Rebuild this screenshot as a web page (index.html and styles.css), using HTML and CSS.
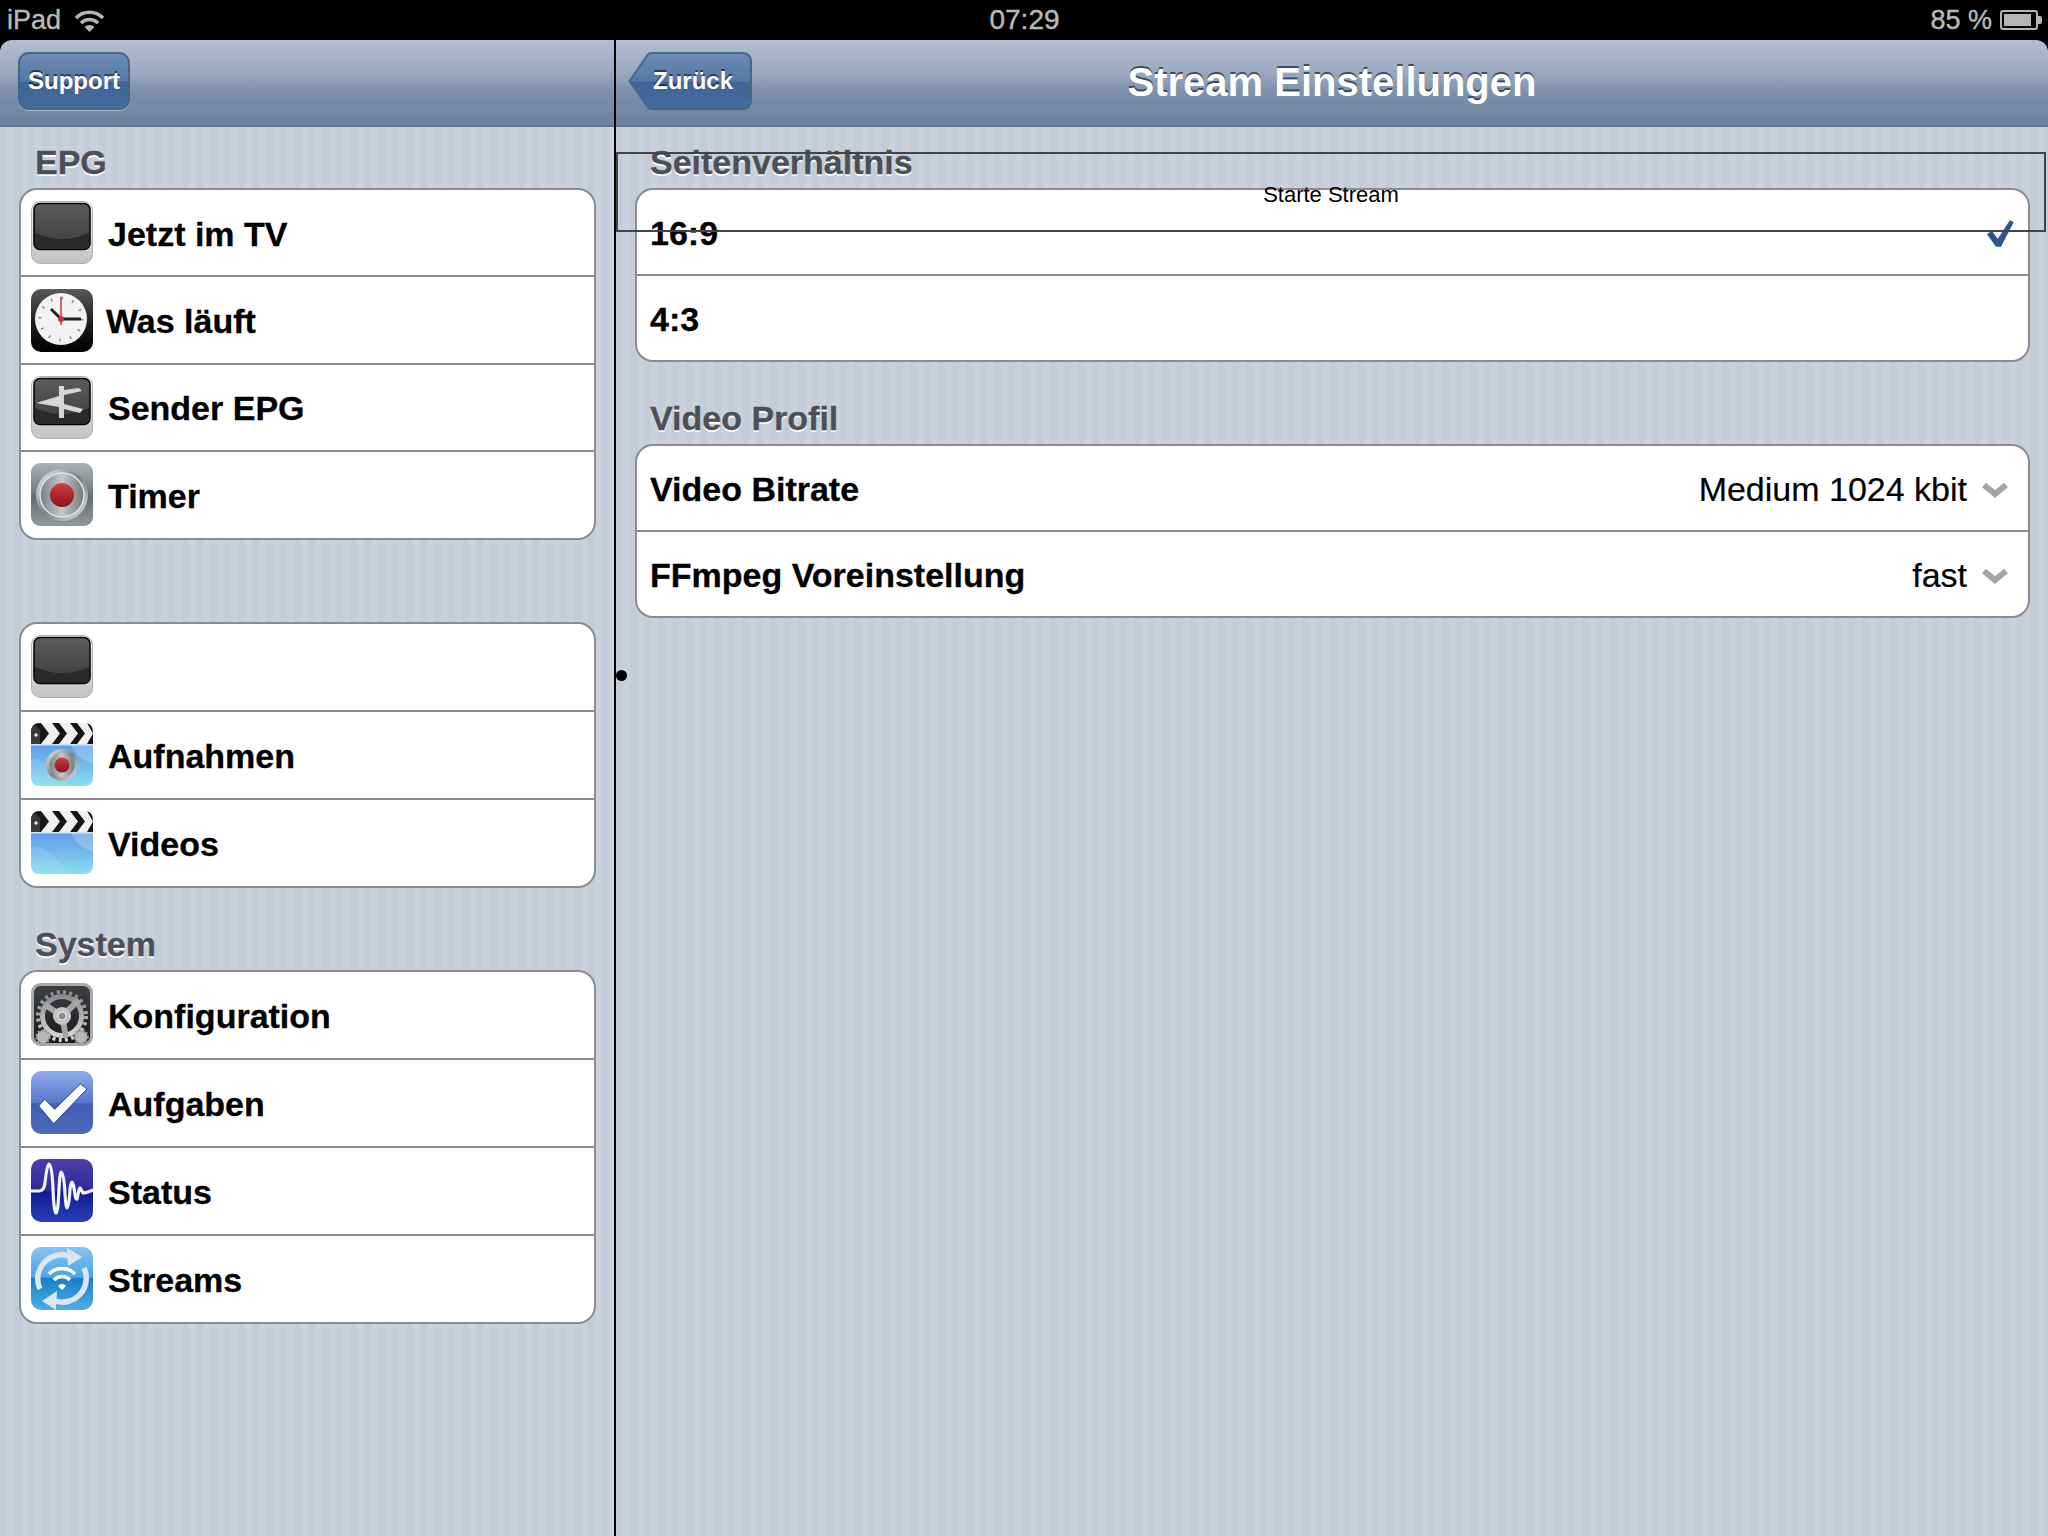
FILE: index.html
```html
<!DOCTYPE html>
<html lang="en">
<head>
  <meta charset="UTF-8">
  <meta name="viewport" content="width=device-width, initial-scale=1.0">
  <title>Stream Einstellungen</title>
  <link rel="stylesheet" href="styles.css">
</head>
<body>

<!-- Shared gradients and the key icon used twice -->
<svg class="svg-defs" aria-hidden="true">
  <defs>
    <linearGradient id="g-key" x1="0" y1="0" x2="0" y2="1"><stop offset="0" stop-color="#f6f6f6"/><stop offset="1" stop-color="#c2c2c2"/></linearGradient>
    <linearGradient id="g-screen" x1="0" y1="0" x2="0" y2="1"><stop offset="0" stop-color="#5c5c5c"/><stop offset="1" stop-color="#3c3c3c"/></linearGradient>
    <linearGradient id="g-clock" x1="0" y1="0" x2="0" y2="1"><stop offset="0" stop-color="#5a5a5a"/><stop offset=".55" stop-color="#1c1c1c"/><stop offset="1" stop-color="#000"/></linearGradient>
    <linearGradient id="g-metal" x1="0" y1="0" x2="0" y2="1"><stop offset="0" stop-color="#aeb2b6"/><stop offset=".48" stop-color="#74797e"/><stop offset=".52" stop-color="#666c71"/><stop offset="1" stop-color="#92979b"/></linearGradient>
    <linearGradient id="g-disc" x1="0" y1="0" x2="1" y2="1"><stop offset="0" stop-color="#f0f0f0"/><stop offset=".5" stop-color="#7c8084"/><stop offset="1" stop-color="#e6e6e6"/></linearGradient>
    <linearGradient id="g-disc-in" x1="0" y1="0" x2="1" y2="0"><stop offset="0" stop-color="#7c8084"/><stop offset=".5" stop-color="#c6c8ca"/><stop offset="1" stop-color="#74787c"/></linearGradient>
    <linearGradient id="g-red" x1="0" y1="0" x2="0" y2="1"><stop offset="0" stop-color="#cc4448"/><stop offset=".5" stop-color="#ae262c"/><stop offset="1" stop-color="#8a181e"/></linearGradient>
    <linearGradient id="g-film" x1="0" y1="0" x2="0" y2="1"><stop offset="0" stop-color="#5f9ce6"/><stop offset=".6" stop-color="#79c0ee"/><stop offset="1" stop-color="#86e0ee"/></linearGradient>
    <linearGradient id="g-gearbg" x1="0" y1="0" x2="0" y2="1"><stop offset="0" stop-color="#3d4145"/><stop offset="1" stop-color="#15181c"/></linearGradient>
    <linearGradient id="g-gear" x1="0" y1="0" x2="0" y2="1"><stop offset="0" stop-color="#8c8c8c"/><stop offset="1" stop-color="#d4d4d4"/></linearGradient>
    <linearGradient id="g-task" x1="0" y1="0" x2="0" y2="1"><stop offset="0" stop-color="#90aced"/><stop offset=".5" stop-color="#5676cc"/><stop offset=".52" stop-color="#3f5fb4"/><stop offset="1" stop-color="#4a68b8"/></linearGradient>
    <linearGradient id="g-wave" x1="0" y1="0" x2="0" y2="1"><stop offset="0" stop-color="#4d3fa8"/><stop offset=".5" stop-color="#2b2a9c"/><stop offset=".52" stop-color="#101c96"/><stop offset="1" stop-color="#2a3cb8"/></linearGradient>
    <linearGradient id="g-sync" x1="0" y1="0" x2="0" y2="1"><stop offset="0" stop-color="#86c4f6"/><stop offset=".48" stop-color="#4ea4e6"/><stop offset=".5" stop-color="#1580c4"/><stop offset="1" stop-color="#4cb0e4"/></linearGradient>
    <linearGradient id="g-nav-btn" x1="0" y1="0" x2="0" y2="1"><stop offset="0" stop-color="#6e8cb4"/><stop offset=".5" stop-color="#5578a6"/><stop offset=".52" stop-color="#3f6599"/><stop offset="1" stop-color="#456a9c"/></linearGradient>
    <symbol id="key-icon" viewBox="0 0 62 63">
      <rect x=".5" y=".5" width="61" height="62" rx="9" fill="url(#g-key)" stroke="#b0b0b0"/>
      <rect x="3" y="2.5" width="56" height="46" rx="6" fill="url(#g-screen)" stroke="#000" stroke-width="1.5"/>
      <path d="M4 32q27 12 54 0v10q0 6-6 6H10q-6 0-6-6z" fill="#2a2a2a"/>
    </symbol>
    <symbol id="clapper" viewBox="0 0 62 63">
      <path d="M0 21V9q0-9 9-9h44q9 0 9 9v12z" fill="#161616"/>
      <path d="M10 0h11l8 10.500-8 10.500H10l8-10.500zM28 0h11l8 10.500-8 10.500H28l8-10.500zM46 0h10l6 10.500-6 10.500H46l8-10.500z" fill="#efefef"/>
      <path d="M0 21V9q0-5 4-7l5 5v14z" fill="#3a3a3a"/>
      <circle cx="5" cy="12" r="1.800" fill="#ddd"/>
      <path d="M0 21h62v33q0 9-9 9H9q-9 0-9-9z" fill="url(#g-film)"/>
      <rect x="0" y="21" width="62" height="1.500" fill="#cfe6f8"/>
      <path d="M40 22h22v18q-15-3-22-18z" fill="#fff" opacity=".22"/>
      <path d="M0 35q24 2 36 28H9q-9 0-9-9z" fill="#fff" opacity=".1"/>
    </symbol>
  </defs>
</svg>

<!-- Status bar -->
<div class="status-bar">
  <div class="status-left">
    <span>iPad</span>
    <svg class="wifi" viewBox="0 0 31 23">
      <path d="M2 9a19 19 0 0 1 27 0M7 14a12 12 0 0 1 17 0" fill="none" stroke="#b4b4b4" stroke-width="3.500"/>
      <path d="M15.500 23l-5-5a7 7 0 0 1 10 0z" fill="#b4b4b4"/>
    </svg>
  </div>
  <div class="status-time">07:29</div>
  <div class="status-right">
    <span>85 %</span>
    <svg class="battery" viewBox="0 0 42 20">
      <rect x="1" y="1" width="36" height="18" rx="2" fill="none" stroke="#b4b4b4" stroke-width="2"/>
      <rect x="4" y="4" width="27" height="12" fill="#b4b4b4"/>
      <path d="M38 6h2q2 0 2 2v4q0 2-2 2h-2z" fill="#b4b4b4"/>
    </svg>
  </div>
</div>

<div class="split">

  <!-- Master -->
  <div class="master">
    <div class="nav-bar nav-bar-left">
      <div class="nav-button">Support</div>
    </div>
    <div class="content content-master">
      <div class="section-title">EPG</div>
      <div class="card card-tight">
        <div class="row">
          <svg class="icon" viewBox="0 0 62 63"><use href="#key-icon"/></svg>
          <span class="row-label">Jetzt im TV</span>
        </div>
        <div class="row">
          <svg class="icon" viewBox="0 0 62 63">
            <rect width="62" height="63" rx="10" fill="url(#g-clock)"/>
            <circle cx="30" cy="30" r="26" fill="#f2f2f2"/>
            <circle cx="30" cy="30" r="21" fill="none" stroke="#8a8a8a" stroke-width="3" stroke-dasharray="1.500 9.500"/>
            <path d="M30 30L20 20" stroke="#222" stroke-width="3"/>
            <path d="M30 30H50" stroke="#222" stroke-width="3"/>
            <path d="M30 36V8" stroke="#c8323c" stroke-width="1.500"/>
            <circle cx="30" cy="30" r="3" fill="#c8323c"/>
          </svg>
          <span class="row-label row-label-clock">Was läuft</span>
        </div>
        <div class="row">
          <svg class="icon" viewBox="0 0 62 63">
            <use href="#key-icon"/>
            <path d="M28 10h5v4l15-2 3 3-18 4v9l19 5-3 4-16-4v9h-5V31L5 27l23-7z" fill="#d6d6d6"/>
          </svg>
          <span class="row-label">Sender EPG</span>
        </div>
        <div class="row">
          <svg class="icon" viewBox="0 0 62 63">
            <rect width="62" height="63" rx="9" fill="url(#g-metal)"/>
            <circle cx="31" cy="32" r="26" fill="url(#g-disc)"/>
            <circle cx="31" cy="32" r="22" fill="url(#g-disc-in)" stroke="#e4e4e4" stroke-width="1.500"/>
            <circle cx="31" cy="32" r="12" fill="url(#g-red)"/>
          </svg>
          <span class="row-label">Timer</span>
        </div>
      </div>

      <div class="section-gap"></div>
      <div class="card">
        <div class="row">
          <svg class="icon" viewBox="0 0 62 63"><use href="#key-icon"/></svg>
        </div>
        <div class="row">
          <svg class="icon" viewBox="0 0 62 63">
            <use href="#clapper"/>
            <circle cx="31" cy="42" r="16" fill="url(#g-disc)"/>
            <circle cx="31" cy="42" r="12.500" fill="url(#g-disc-in)"/>
            <circle cx="31" cy="42" r="7.500" fill="url(#g-red)"/>
          </svg>
          <span class="row-label">Aufnahmen</span>
        </div>
        <div class="row">
          <svg class="icon" viewBox="0 0 62 63"><use href="#clapper"/></svg>
          <span class="row-label">Videos</span>
        </div>
      </div>

      <div class="section-title">System</div>
      <div class="card">
        <div class="row">
          <svg class="icon" viewBox="0 0 62 63">
            <rect x="1.500" y="1.500" width="59" height="60" rx="8" fill="url(#g-gearbg)" stroke="#a8a8a8" stroke-width="3"/>
            <circle cx="31" cy="33" r="24" fill="none" stroke="url(#g-gear)" stroke-width="4" stroke-dasharray="3 3.300"/>
            <circle cx="31" cy="33" r="19.500" fill="none" stroke="url(#g-gear)" stroke-width="5"/>
            <path d="M31 33L13 21M31 33L48 17M31 33L35 54" stroke="#a4a4a4" stroke-width="6"/>
            <circle cx="31" cy="33" r="9" fill="#c4c4c4"/>
            <circle cx="31" cy="33" r="4" fill="#8a8a8a" stroke="#eee"/>
            <circle cx="12" cy="54" r="6.500" fill="#b8b8b8" stroke="#999" stroke-width="2.500" stroke-dasharray="2 1.500"/>
            <circle cx="50" cy="54" r="6.500" fill="#b8b8b8" stroke="#999" stroke-width="2.500" stroke-dasharray="2 1.500"/>
          </svg>
          <span class="row-label">Konfiguration</span>
        </div>
        <div class="row">
          <svg class="icon" viewBox="0 0 62 63">
            <rect width="62" height="63" rx="10" fill="url(#g-task)"/>
            <path d="M7.700 35L22.700 52.700L56 18L49.300 13L23.700 38.300L13.700 28.300z" fill="#fff" stroke="#2c4590" stroke-width="1"/>
          </svg>
          <span class="row-label">Aufgaben</span>
        </div>
        <div class="row">
          <svg class="icon" viewBox="0 0 62 63">
            <rect width="62" height="63" rx="10" fill="url(#g-wave)"/>
            <path d="M0 32H8Q13 32 14 24Q16 5 18 5Q21 5 22 30Q23 54 25 54Q27 54 28 30Q29 13 30 13Q33 14 34 35Q35 49 36 49Q38 49 39 30Q40 23 41 23Q43 26 44 36Q45 41 46 40Q48 30 49 29Q51 32 52 34Q55 34 62 31" fill="none" stroke="#f2f4ff" stroke-width="3.200" stroke-linejoin="round"/>
          </svg>
          <span class="row-label">Status</span>
        </div>
        <div class="row">
          <svg class="icon" viewBox="0 0 62 63">
            <rect width="62" height="63" rx="10" fill="url(#g-sync)"/>
            <path d="M9 42A24 24 0 0 1 38 9" fill="none" stroke="#dbe6ee" stroke-width="5.500"/>
            <path d="M53 21A24 24 0 0 1 24 54" fill="none" stroke="#dbe6ee" stroke-width="5.500"/>
            <path d="M36 1l15 9-14 9zM26 44l-15 10 14 9z" fill="#dbe6ee"/>
            <path d="M18 27a18 18 0 0 1 26 0M23 33a11 11 0 0 1 16 0" fill="none" stroke="#fff" stroke-width="3.500"/>
            <path d="M31 43l-4-4a5 5 0 0 1 8 0z" fill="#fff"/>
          </svg>
          <span class="row-label">Streams</span>
        </div>
      </div>
    </div>
  </div>

  <!-- Detail -->
  <div class="detail">
    <div class="nav-bar nav-bar-right">
      <div class="back-button">
        <svg class="back-shape" viewBox="0 0 124 58">
          <path d="M1.500 29L20 2.500Q21 1 24 1H114Q123 1 123 10V48Q123 57 114 57H24Q21 57 20 55.500z" fill="url(#g-nav-btn)" stroke="#4a6484" stroke-width="2"/>
        </svg>
        <span class="back-label">Zurück</span>
      </div>
      <div class="nav-title">Stream Einstellungen</div>
    </div>
    <div class="content content-detail">
      <div class="section-title section-title-detail">Seitenverhältnis</div>
      <div class="card card-detail">
        <div class="row">
          <span class="row-label">16:9</span>
          <svg class="check" viewBox="0 0 27 27"><path d="M0 14.300L9 26.700H14L26.700 2.300L23 0L10.700 19L5 10.700z" fill="#2f5590"/></svg>
        </div>
        <div class="row">
          <span class="row-label">4:3</span>
        </div>
      </div>

      <div class="section-title section-title-detail">Video Profil</div>
      <div class="card card-detail">
        <div class="row">
          <span class="row-label">Video Bitrate</span>
          <span class="row-value">Medium 1024 kbit</span>
          <svg class="chevron" viewBox="0 0 26 16"><path d="M2 3l11 9 11-9" fill="none" stroke="#a4a4a4" stroke-width="6"/></svg>
        </div>
        <div class="row">
          <span class="row-label">FFmpeg Voreinstellung</span>
          <span class="row-value">fast</span>
          <svg class="chevron" viewBox="0 0 26 16"><path d="M2 3l11 9 11-9" fill="none" stroke="#a4a4a4" stroke-width="6"/></svg>
        </div>
      </div>
    </div>

    <!-- Stream button lying over the table -->
    <div class="stream-button">Starte Stream</div>
    <div class="stream-dot"></div>
  </div>
</div>

</body>
</html>
```

FILE: styles.css
```css
body {
  font-family: "Liberation Sans", Arial, sans-serif;
  margin: 0;
  padding: 0;
  height: 1536px;
  overflow: hidden;
  background-color: #000;
}

.svg-defs {
  position: absolute;
  width: 0;
  height: 0;
}

/* Status bar */
.status-bar {
  display: grid;
  grid-template-columns: 1fr auto 1fr;
  align-items: center;
  height: 40px;
  padding: 0 6px 0 7px;
  color: #b8b8b8;
  font-size: 27px;
  -webkit-text-stroke: 0.4px #b8b8b8;
}

.status-time {
  font-size: 28px;
}

.status-left {
  display: flex;
  align-items: center;
  gap: 13px;
}

.status-right {
  display: flex;
  align-items: center;
  justify-content: flex-end;
  gap: 8px;
}

.wifi {
  width: 31px;
  height: 23px;
}

.battery {
  width: 42px;
  height: 20px;
}

/* Two panes */
.split {
  display: flex;
  height: 1496px;
}

.master {
  width: 614px;
  border-right: 2px solid #000;
  flex-shrink: 0;
}

.detail {
  flex: 1;
  position: relative;
}

.nav-bar {
  display: flex;
  align-items: center;
  box-sizing: border-box;
  height: 87px;
  padding-bottom: 3px;
  border-bottom: 2px solid #5f7690;
  background: linear-gradient(#b3bfcf, #9aa9c0 38%, #7c90ac 62%, #6c82a0);
  position: relative;
}

.nav-bar-left {
  border-top-left-radius: 12px;
  padding-left: 18px;
}

.nav-bar-right {
  border-top-right-radius: 12px;
  padding-left: 12px;
}

.nav-button {
  display: flex;
  align-items: center;
  justify-content: center;
  box-sizing: border-box;
  width: 112px;
  height: 58px;
  border: 2px solid #4a6484;
  border-radius: 11px;
  background: linear-gradient(#6e8cb4, #5578a6 50%, #3f6599 52%, #456a9c);
  box-shadow: 0 1px 0 rgba(255, 255, 255, 0.35);
  color: #fff;
  font-size: 24px;
  font-weight: bold;
  text-shadow: 0 -2px 0 rgba(0, 0, 0, 0.55);
}

.back-button {
  position: relative;
  display: flex;
  align-items: center;
  justify-content: center;
  width: 124px;
  height: 58px;
  color: #fff;
  font-size: 24px;
  font-weight: bold;
  text-shadow: 0 -2px 0 rgba(0, 0, 0, 0.55);
}

.back-shape {
  position: absolute;
  top: 0;
  left: 0;
  width: 124px;
  height: 58px;
}

.back-label {
  position: relative;
  padding-left: 6px;
}

.nav-title {
  position: absolute;
  left: 0;
  right: 0;
  margin-top: 3px;
  text-align: center;
  color: #fff;
  font-size: 40px;
  font-weight: bold;
  text-shadow: 0 -2px 0 rgba(40, 50, 70, 0.8);
}

/* Pinstripe background */
.content {
  height: 1409px;
  box-sizing: border-box;
  padding-top: 1px;
  background: repeating-linear-gradient(90deg, #c4ccd6 0, #c4ccd6 7px, #c9d1da 7px, #c9d1da 14px);
}

.content-master {
  padding-left: 19px;
  padding-right: 18px;
}

.content-detail {
  padding-left: 19px;
  padding-right: 18px;
}

.section-title {
  box-sizing: border-box;
  height: 60px;
  padding: 14px 0 6px 16px;
  line-height: 40px;
  font-size: 34px;
  font-weight: bold;
  color: #4d4f55;
  text-shadow: 0 2px 0 #fff;
  -webkit-text-stroke: 0.3px #4d4f55;
}

.section-title-detail {
  padding-left: 15px;
}

.section-gap {
  height: 60.4px;
}

.card {
  border: 2px solid #8a8c8f;
  border-radius: 18px;
  background-color: #fff;
  margin-bottom: 22px;
}

.row {
  display: flex;
  align-items: center;
  height: 86px;
  padding-left: 10px;
}

.row + .row {
  border-top: 2px solid #8a8c8f;
}

.card-tight .row {
  height: 85.4px;
}

.card-detail .row {
  height: 84px;
  padding: 0 20px 0 13px;
}

.icon {
  width: 62px;
  height: 63px;
  flex-shrink: 0;
}

.row-label {
  margin-left: 15px;
  padding-top: 3px;
  font-size: 34px;
  font-weight: bold;
  color: #000;
  -webkit-text-stroke: 0.3px #000;
}

.row-label-clock {
  margin-left: 13px;
}

.card-detail .row-label {
  margin-left: 0;
}

.row-value {
  margin-left: auto;
  padding-top: 3px;
  font-size: 34px;
  color: #000;
  -webkit-text-stroke: 0.2px #000;
}

.chevron {
  width: 26px;
  height: 16px;
  margin-left: 15px;
  margin-top: 3px;
}

.check {
  width: 27px;
  height: 27px;
  margin-left: auto;
  margin-right: -6px;
  margin-top: 2px;
}

/* Overlay */
.stream-button {
  position: absolute;
  top: 112px;
  left: 0;
  display: flex;
  align-items: center;
  justify-content: center;
  box-sizing: border-box;
  width: 1430px;
  height: 80px;
  padding-top: 6px;
  border: 2px solid #444;
  font-size: 22px;
  color: #000;
}

.stream-dot {
  position: absolute;
  top: 630px;
  left: 0;
  width: 11px;
  height: 11px;
  border-radius: 50%;
  background-color: #000;
}
```
